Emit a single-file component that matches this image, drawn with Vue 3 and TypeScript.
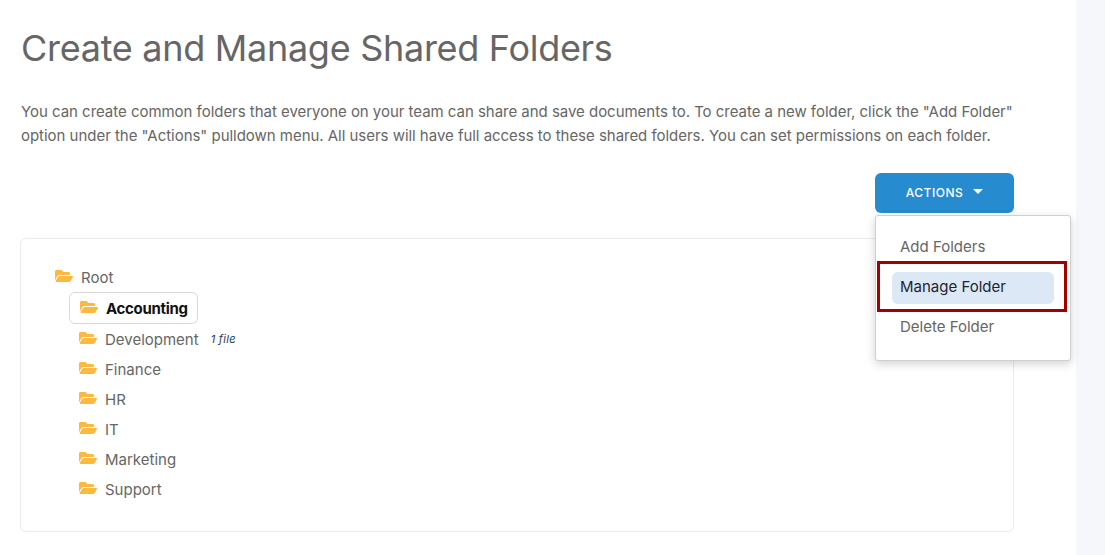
<script setup lang="ts">
const children = ['Development', 'Finance', 'HR', 'IT', 'Marketing', 'Support']
const folderPath = 'M572.694 292.093L500.27 416.248A63.997 63.997 0 0 1 444.989 448H45.025c-18.523 0-30.064-20.093-20.731-36.093l72.424-124.155A64 64 0 0 1 152 256h399.964c18.523 0 30.064 20.093 20.73 36.093zM152 224h328v-48c0-26.51-21.49-48-48-48H272l-64-64H48C21.49 64 0 85.49 0 112v278.046l69.077-118.418C86.214 242.25 117.989 224 152 224z'
</script>

<template>
  <div class="page">
    <main class="content">
      <h1 class="title">Create and Manage Shared Folders</h1>
      <p class="intro">You can create common folders that everyone on your team can share and save documents to. To create a new folder, click the "Add Folder" option under the "Actions" pulldown menu. All users will have full access to these shared folders. You can set permissions on each folder.</p>
      <div class="actions-row">
        <div class="actions">
          <button class="actions-btn" type="button">ACTIONS<span class="caret"></span></button>
          <div class="menu">
            <div class="menu-item">Add Folders</div>
            <div class="menu-item active">Manage Folder</div>
            <div class="menu-item">Delete Folder</div>
            <div class="callout"></div>
          </div>
        </div>
      </div>
      <section class="card">
        <div class="node root">
          <svg class="folder" viewBox="0 0 576 512"><path :d="folderPath" /></svg>
          <span>Root</span>
        </div>
        <div class="children">
          <div class="node selected">
            <svg class="folder" viewBox="0 0 576 512"><path :d="folderPath" /></svg>
            <span>Accounting</span>
          </div>
          <div v-for="name in children" :key="name" class="node">
            <svg class="folder" viewBox="0 0 576 512"><path :d="folderPath" /></svg>
            <span>{{ name }}</span>
            <em v-if="name === 'Development'" class="count">1 file</em>
          </div>
        </div>
      </section>
    </main>
    <aside class="rail"></aside>
  </div>
</template>

<style>
html, body { margin: 0; background: #fff; }
</style>

<style scoped>
.page {
  display: flex;
  height: 555px;
  overflow: hidden;
  font-family: "Inter", "Noto Sans", sans-serif;
  color: #666;
}
.content {
  width: 1076px;
  box-sizing: border-box;
  padding: 27px 62px 0 20px;
  flex: none;
}
.rail { flex: 1; background: #f6f7fa; }
.title {
  margin: 0 0 0 1px;
  font-size: 36px;
  line-height: 42px;
  font-weight: 400;
  letter-spacing: -.29px;
  color: #666;
  white-space: nowrap;
}
.intro {
  margin: 31px 0 0 1px;
  font-size: 15px;
  line-height: 24px;
  letter-spacing: -.03px;
  color: #666;
  width: 1000px;
}
.actions-row {
  display: flex;
  justify-content: flex-end;
  margin-top: 25px;
  height: 65px;
}
.actions { position: relative; width: 139px; height: 40px; }
.actions-btn {
  width: 100%;
  height: 40px;
  padding: 0 0 2px;
  border: 0;
  border-radius: 6px;
  background: #268ccf;
  color: #fff;
  font: 500 12px "Inter", sans-serif;
  letter-spacing: .5px;
  display: flex;
  align-items: center;
  justify-content: center;
}
.caret {
  margin-left: 10px;
  margin-bottom: 1px;
  border-left: 5px solid transparent;
  border-right: 5px solid transparent;
  border-top: 5px solid #fff;
}
.menu {
  position: absolute;
  z-index: 2;
  left: 0;
  top: 42px;
  width: 196px;
  height: 146px;
  box-sizing: border-box;
  padding: 16px 16px 0;
  background: #fff;
  border: 1px solid #d0d0d0;
  border-radius: 3px;
  box-shadow: 0 3px 10px rgba(0, 0, 0, .18);
}
.menu-item {
  height: 32px;
  margin-bottom: 8px;
  padding-left: 8px;
  font-size: 15px;
  line-height: 30px;
  border-radius: 6px;
  color: #666;
}
.menu-item.active { background: #dce8f5; color: #1d2433; }
.callout {
  position: absolute;
  left: 1px;
  top: 45px;
  width: 190px;
  height: 51px;
  box-sizing: border-box;
  border: 3px solid #a50000;
}
.card {
  box-sizing: border-box;
  height: 294px;
  border: 1px solid #ebebeb;
  border-radius: 6px;
  padding: 23px 34px 0;
}
.node {
  display: flex;
  align-items: center;
  height: 30px;
  font-size: 15px;
  color: #666;
  white-space: nowrap;
}
.folder { width: 18px; height: 16px; margin-right: 8px; margin-bottom: 2px; fill: #fdb83f; flex: none; }
.children { margin-left: 24px; }
.selected {
  height: 32px;
  width: 129px;
  box-sizing: border-box;
  margin-left: -10px;
  padding-left: 10px;
  border: 1px solid #d9d9d9;
  border-radius: 6px;
  font-weight: 700;
  letter-spacing: -.3px;
  color: #111;
}
.count { margin-left: 12px; font-size: 11px; letter-spacing: .3px; color: #1c3d5a; }
</style>
